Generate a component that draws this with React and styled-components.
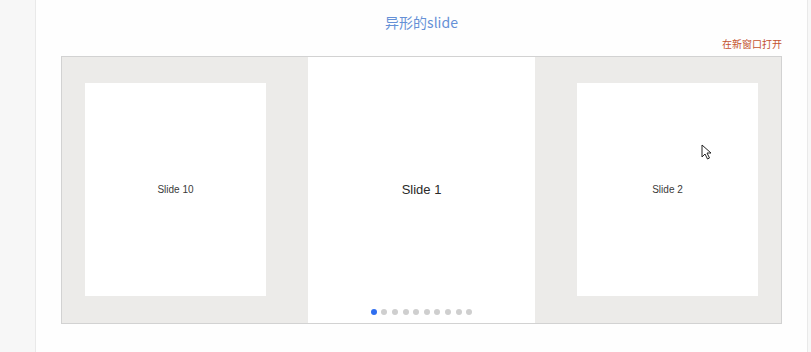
import styled, { createGlobalStyle } from 'styled-components';

const GlobalStyle = createGlobalStyle`
  body {
    margin: 0;
    background: #ffffff;
    font-family: "Liberation Sans", Arial, sans-serif;
  }
`;

const Page = styled.div`
  display: flex;
  height: 352px;
  overflow: hidden;
`;

const Sidebar = styled.div`
  width: 35px;
  flex-shrink: 0;
  background: #f7f7f7;
  border-right: 1px solid #e9e9e9;
`;

const Main = styled.div`
  width: 771px;
  flex-shrink: 0;
  padding: 0 25px;
  box-sizing: border-box;
  background: #fefefe;
`;

const Edge = styled.div`
  flex: 1;
  background: #f7f7f7;
  border-left: 1px solid #e9e9e9;
`;

const Title = styled.h2`
  margin: 0;
  padding-top: 12px;
  font-size: 14px;
  line-height: 20px;
  font-weight: normal;
  text-align: center;
  color: #6590d6;
  font-family: "Noto Sans CJK SC", "Liberation Sans", sans-serif;
`;

const OpenLink = styled.a`
  display: block;
  margin-top: 5px;
  font-size: 10px;
  line-height: 14px;
  text-align: right;
  color: #c4522f;
  text-decoration: none;
  font-family: "Noto Sans CJK SC", sans-serif;
`;

const Swiper = styled.div`
  position: relative;
  margin-top: 5px;
  height: 266px;
  display: flex;
  border: 1px solid #d2d2d2;
  background: #ecebe9;
`;

const SideSlide = styled.div`
  width: ${(p) => p.$w}px;
  flex-shrink: 0;
  display: flex;
  justify-content: ${(p) => (p.$side === 'left' ? 'flex-start' : 'flex-end')};
  padding: 26px ${(p) => (p.$side === 'left' ? '0 27px 23px' : '24px 27px 0')};
  box-sizing: border-box;
`;

const Card = styled.div`
  width: 181px;
  height: 213px;
  background: #ffffff;
  display: flex;
  align-items: center;
  justify-content: center;
  font-size: 10px;
  color: #3a3a3a;
`;

const ActiveSlide = styled.div`
  width: 227px;
  flex-shrink: 0;
  background: #ffffff;
  display: flex;
  align-items: center;
  justify-content: center;
  font-size: 13px;
  color: #2a2a2a;
  padding-bottom: 1px;
  box-sizing: border-box;
`;

const Dots = styled.div`
  position: absolute;
  bottom: 8px;
  left: 0;
  right: 0;
  display: flex;
  justify-content: center;
  gap: 4.6px;
`;

const Dot = styled.span`
  width: 6px;
  height: 6px;
  border-radius: 50%;
  background: ${(p) => (p.$active ? '#2f6ef0' : '#cfcfcf')};
`;

const Cursor = styled.svg`
  position: absolute;
  left: 639px;
  top: 87px;
`;

const App = () => {
  const dots = Array.from({ length: 10 }, (_, i) => i);
  return (
    <>
      <GlobalStyle />
      <Page>
        <Sidebar />
        <Main>
          <Title>异形的slide</Title>
          <OpenLink href="#">在新窗口打开</OpenLink>
          <Swiper>
            <SideSlide $w={246} $side="left">
              <Card>Slide 10</Card>
            </SideSlide>
            <ActiveSlide>Slide 1</ActiveSlide>
            <SideSlide $w={247} $side="right">
              <Card>Slide 2</Card>
            </SideSlide>
            <Dots>
              {dots.map((i) => (
                <Dot key={i} $active={i === 0} />
              ))}
            </Dots>
            <Cursor width="12" height="16" viewBox="0 0 12 16">
              <path
                d="M1 1 L1 13 L4 10 L6.5 15 L8.5 14 L6 9 L10 9 Z"
                fill="#fff"
                stroke="#222"
                strokeWidth="1"
                strokeLinejoin="round"
              />
            </Cursor>
          </Swiper>
        </Main>
        <Edge />
      </Page>
    </>
  );
};

export default App;
